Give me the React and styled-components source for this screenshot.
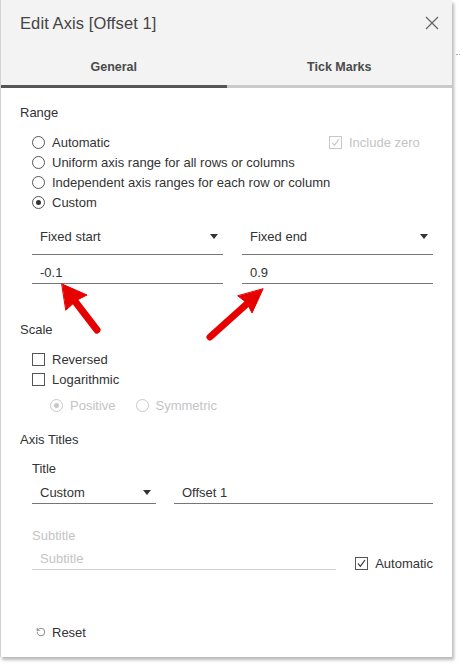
import React from 'react'
import styled, { createGlobalStyle } from 'styled-components'
import { RotateCcw } from 'lucide-react'

const Global = createGlobalStyle`
    body {
        margin:0;
        background:#fff;
        font-family:"Liberation Sans", Arial, sans-serif;
        color:#333;
    }
`

const Page = styled.div`
    position:relative;
    width:460px;
    height:665px;
    display:flex;
    align-items:flex-start;
`

const Dialog = styled.div`
    width:451px;
    height:657px;
    border-left:1px solid #d2d2d2;
    background:#fff;
    box-shadow:2px 3px 3px rgba(0,0,0,0.28);
    display:flex;
    flex-direction:column;
`

const Backdrop = styled.div`
    margin:54px 0 0 4px;
    width:5px;
    border-top:1px dotted #aaa;
`

const Header = styled.div`
    background:#f3f3f3;
`

const TitleBar = styled.div`
    height:46px;
    display:flex;
    align-items:center;
    justify-content:space-between;
    padding:0 12px 0 19px;
`

const Title = styled.div`
    font-size:16.5px;
    color:#444;
    letter-spacing:0.1px;
`

const Close = styled.button`
    border:none;
    background:none;
    padding:0;
    width:16px;
    height:16px;
    display:flex;
    cursor:pointer;
`

const Tabs = styled.div`
    display:flex;
`

const Tab = styled.div`
    flex:1;
    height:36px;
    display:flex;
    align-items:center;
    justify-content:center;
    padding-top:3px;
    font-size:12.5px;
    font-weight:bold;
    color:#4a4a4a;
    border-bottom:3px solid ${p => p.active ? '#555' : '#cacaca'};
`

const Body = styled.div`
    padding:0 19px;
    display:flex;
    flex-direction:column;
`

const Label = styled.div`
    height:20px;
    line-height:20px;
    font-size:13px;
    color:${p => p.disabled ? '#c4c4c4' : '#333'};
    margin-top:${p => p.top || 0}px;
    padding-left:${p => p.indent || 0}px;
`

const Options = styled.div`
    display:flex;
    flex-direction:column;
    padding-left:${p => p.indent || 12}px;
    margin-top:${p => p.top || 0}px;
`

const Row = styled.div`
    display:flex;
    align-items:center;
    gap:${p => p.gap || 0}px;
`

const Option = styled.label`
    height:20px;
    display:flex;
    align-items:center;
    gap:7px;
    font-size:13px;
    color:${p => p.disabled ? '#c4c4c4' : '#333'};
`

const Radio = styled.span`
    width:11px;
    height:11px;
    border-radius:50%;
    border:1px solid ${p => p.disabled ? '#c8c8c8' : '#555'};
    display:flex;
    align-items:center;
    justify-content:center;
    flex-shrink:0;
    &::after {
        content:"";
        display:${p => p.checked ? 'block' : 'none'};
        width:5px;
        height:5px;
        border-radius:50%;
        background:${p => p.disabled ? '#c8c8c8' : '#333'};
    }
`

const Box = styled.span`
    width:11px;
    height:11px;
    border:1px solid ${p => p.disabled ? '#c8c8c8' : '#555'};
    display:flex;
    align-items:center;
    justify-content:center;
    flex-shrink:0;
`

const IncludeZero = styled.div`
    margin-left:auto;
    width:104px;
`

const Pair = styled.div`
    display:grid;
    grid-template-columns:${p => p.cols || '1fr 1fr'};
    column-gap:${p => p.gap || 19}px;
    padding-left:12px;
    margin-top:${p => p.top || 0}px;
`

const Field = styled.div`
    height:${p => p.h || 21}px;
    display:flex;
    align-items:center;
    justify-content:space-between;
    padding:0 5px 0 8px;
    border-bottom:1px solid ${p => p.faint ? '#d0d0d0' : '#767676'};
    font-size:13px;
    color:${p => p.faint ? '#c4c4c4' : '#333'};
`

const Caret = styled.span`
    width:0;
    height:0;
    border-left:4px solid transparent;
    border-right:4px solid transparent;
    border-top:5px solid #333;
`

const SubRow = styled.div`
    display:flex;
    align-items:flex-end;
    gap:19px;
    padding-left:12px;
    margin-top:2px;
`

const SubField = styled(Field)`
    width:305px;
    box-sizing:border-box;
    height:22px;
`

const Auto = styled.div`
    margin-bottom:-3px;
`

const Footer = styled.div`
    margin-top:auto;
    padding:0 0 15px 35px;
    height:20px;
    display:flex;
    align-items:center;
    gap:6px;
    font-size:13px;
    color:#333;
`

const Annotations = styled.svg`
    position:absolute;
    top:0;
    left:0;
    pointer-events:none;
`

function Check({ disabled }) {
    return (
        <svg width="9" height="9" viewBox="0 0 9 9">
            <path d="M1 4.6 L3.4 7.4 L8 1" fill="none" stroke={disabled ? '#c8c8c8' : '#333'} strokeWidth="1.2" />
        </svg>
    )
}

function App() {
    return (
        <Page>
            <Global />
            <Dialog>
                <Header>
                    <TitleBar>
                        <Title>Edit Axis [Offset 1]</Title>
                        <Close aria-label="Close">
                            <svg width="16" height="16" viewBox="0 0 16 16">
                                <path d="M2 2 L14 14 M14 2 L2 14" stroke="#666" strokeWidth="1.3" />
                            </svg>
                        </Close>
                    </TitleBar>
                    <Tabs>
                        <Tab active>General</Tab>
                        <Tab>Tick Marks</Tab>
                    </Tabs>
                </Header>

                <Body>
                    <Label top={15}>Range</Label>
                    <Options top={9}>
                        <Row>
                            <Option><Radio />Automatic</Option>
                            <IncludeZero>
                                <Option disabled><Box disabled><Check disabled /></Box>Include zero</Option>
                            </IncludeZero>
                        </Row>
                        <Option><Radio />Uniform axis range for all rows or columns</Option>
                        <Option><Radio />Independent axis ranges for each row or column</Option>
                        <Option><Radio checked />Custom</Option>
                    </Options>

                    <Pair top={6}>
                        <Field h={36}>Fixed start<Caret /></Field>
                        <Field h={36}>Fixed end<Caret /></Field>
                    </Pair>
                    <Pair top={7}>
                        <Field>-0.1</Field>
                        <Field>0.9</Field>
                    </Pair>

                    <Label top={36}>Scale</Label>
                    <Options top={9}>
                        <Option><Box />Reversed</Option>
                        <Option><Box />Logarithmic</Option>
                    </Options>
                    <Options indent={30} top={6}>
                        <Row gap={20}>
                            <Option disabled><Radio disabled checked />Positive</Option>
                            <Option disabled><Radio disabled />Symmetric</Option>
                        </Row>
                    </Options>

                    <Label top={15}>Axis Titles</Label>
                    <Label top={9} indent={12}>Title</Label>
                    <Pair top={2} cols="124px 1fr" gap={18}>
                        <Field h={22}>Custom<Caret /></Field>
                        <Field h={22}>Offset 1</Field>
                    </Pair>

                    <Label top={22} indent={12} disabled>Subtitle</Label>
                    <SubRow>
                        <SubField faint>Subtitle</SubField>
                        <Auto>
                            <Option><Box><Check /></Box>Automatic</Option>
                        </Auto>
                    </SubRow>
                </Body>

                <Footer>
                    <RotateCcw size={10} strokeWidth={1.6} color="#555" />
                    Reset
                </Footer>
            </Dialog>
            <Backdrop />

            <Annotations width="460" height="665">
                <g fill="#e60000" stroke="#e60000" strokeLinecap="round" strokeLinejoin="round">
                    <line x1="74" y1="300" x2="97" y2="330" strokeWidth="7" />
                    <polygon points="62,284 87,295 77,300 66,310" strokeWidth="1" />
                    <line x1="249" y1="302" x2="210" y2="337" strokeWidth="7" />
                    <polygon points="263,289 252,313 247,303 238,296" strokeWidth="1" />
                </g>
            </Annotations>
        </Page>
    )
}

export default App
